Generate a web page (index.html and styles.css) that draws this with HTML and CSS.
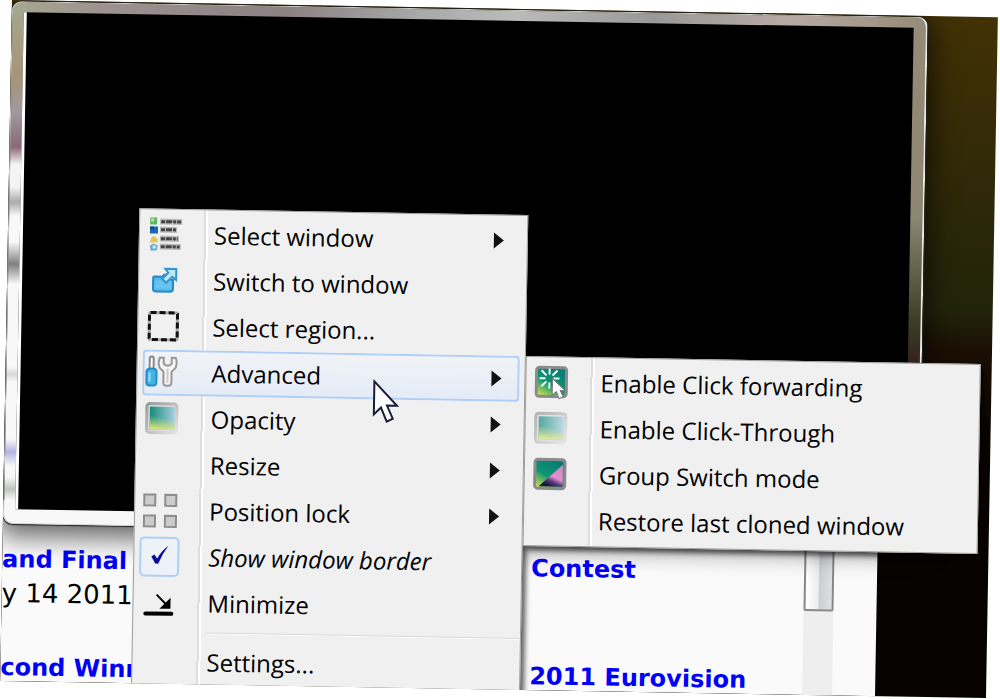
FILE: index.html
```html
<!DOCTYPE html>
<html lang="en">
<head>
<meta charset="UTF-8">
<meta name="viewport" content="width=device-width, initial-scale=1.0">
<title>Cloned window menu</title>
<link rel="stylesheet" href="styles.css">
</head>
<body>

<div class="desktop">
<div class="page">
<div class="news">
<div class="news-left">
<a class="headline" href="#">and Final -</a>
<p class="date">y 14 2011</p>
<a class="headline last" href="#">cond Winner</a>
</div>
<div class="news-right">
<a class="headline" href="#">Contest</a>
<a class="headline last" href="#">2011 Eurovision</a>
</div>
</div>
<div class="scrollbar"><div class="thumb"></div></div>
</div>

<div class="clone-window"><div class="preview"></div></div>

<div class="menu main-menu" role="menu">
<button class="item" type="button">
<svg class="icon" viewBox="0 0 36 36">
<path d="M3 1h7v7H3z" fill="#5fb85c"/><path d="M4 2h3v3H4z" fill="#b7e6a4"/>
<path d="M3 10h8v7H3z" fill="#1c67b5"/><path d="M3 10h4v3H3z" fill="#174a87"/>
<path d="M4 22l3-3 4 4v3H3z" fill="#e3c565"/>
<path d="M3 29l4-2 4 2-1 5H4z" fill="#69a9d4"/><path d="M6 29h3v3H6z" fill="#d8edf8"/>
<path d="M13 5h22M13 13h17M13 22h19M13 30h21" stroke="#bbb" stroke-width="6"/>
<path d="M14 5h20M14 13h15M14 22h17M14 30h19" stroke="#444" stroke-width="3" stroke-dasharray="4 1 6 1 3 1"/>
</svg>
<span>Select window</span><i class="arrow"></i>
</button>
<button class="item" type="button">
<svg class="icon" viewBox="0 0 36 36">
<path d="M8 14h8l2-2h4v5h5v9q0 3-3 3H10q-3 0-3-3V16q0-2 1-2z" fill="#55b9ed" stroke="#2789c5" stroke-width="2"/>
<path d="M9 18h16v8H9z" fill="#67c4f1"/>
<path d="M19 6h11v11l-4-3-6 6-4-4 6-6z" fill="#b9e8fa" stroke="#3297ce" stroke-width="2"/>
</svg>
<span>Switch to window</span>
</button>
<button class="item" type="button">
<svg class="icon" viewBox="0 0 36 36">
<rect x="4" y="4" width="28" height="27" rx="1" fill="none" stroke="#aaa" stroke-width="3"/>
<rect x="4" y="4" width="28" height="27" rx="1" fill="none" stroke="#111" stroke-width="3" stroke-dasharray="6 3"/>
</svg>
<span>Select region...</span>
</button>
<button class="item active" type="button">
<svg class="icon" viewBox="0 0 36 36">
<path d="M5 14V4q0-2 2-2t2 2v10" fill="#fff" stroke="#888" stroke-width="2"/>
<path d="M2 17q0-3 5-3t5 3v11q0 3-3 3H5q-3 0-3-3z" fill="#43b4ea" stroke="#2d8ac0" stroke-width="2"/>
<path d="M5 18v9" stroke="#a2e0fb" stroke-width="2"/>
<path d="M15 3h4v6q4 4 8 0V3h4q2 4 0 10l-4 4v11q0 3-3 3h-2q-3 0-3-3V17l-4-4q-2-5 0-10z" fill="#f5f5f5" stroke="#999" stroke-width="2"/>
<path d="M23 14v14" stroke="#ccc" stroke-width="2"/>
</svg>
<span>Advanced</span><i class="arrow"></i>
</button>
<button class="item" type="button">
<svg class="icon" viewBox="0 0 36 36">
<defs>
<linearGradient id="teal" x1="0" y1="0" x2="1" y2="0"><stop offset="0" stop-color="#168c7e"/><stop offset="1" stop-color="#a5cfdc"/></linearGradient>
<linearGradient id="glow" x1=".2" y1="0" x2="0" y2="1"><stop offset=".4" stop-color="#e8e85a" stop-opacity="0"/><stop offset="1" stop-color="#f1f183"/></linearGradient>
<linearGradient id="fade" x1="0" y1="0" x2="1" y2="1"><stop offset="0" stop-color="#999"/><stop offset="1" stop-color="#e4e4e4"/></linearGradient>
<linearGradient id="deep" x1=".6" y1="0" x2="0" y2="1"><stop offset="0" stop-color="#087d72"/><stop offset=".5" stop-color="#129472"/><stop offset="1" stop-color="#f0ee4a"/></linearGradient>
<linearGradient id="pink" x1="1" y1="0" x2=".5" y2="1"><stop offset="0" stop-color="#c38fb4"/><stop offset=".6" stop-color="#e58fd2"/><stop offset=".8" stop-color="#5b3a80"/><stop offset="1" stop-color="#1b1540"/></linearGradient>
</defs>
<rect x="3" y="3" width="30" height="29" rx="3" fill="#ddd" stroke="url(#fade)" stroke-width="3"/>
<path d="M6 6h25v23H6z" fill="url(#teal)"/><path d="M6 6h25v23H6z" fill="url(#glow)"/>
</svg>
<span>Opacity</span><i class="arrow"></i>
</button>
<button class="item" type="button">
<b class="icon"></b><span>Resize</span><i class="arrow"></i>
</button>
<button class="item" type="button">
<svg class="icon" viewBox="0 0 36 36">
<g fill="#ccc" stroke="#8d8d8d" stroke-width="2">
<path d="M2 2h11v11H2zM23 2h11v11H23zM2 23h11v11H2zM23 23h11v11H23z"/>
</g>
</svg>
<span>Position lock</span><i class="arrow"></i>
</button>
<label class="item checked">
<input class="tick" type="checkbox" checked>
<svg class="icon" viewBox="0 0 36 36">
<path d="M10 18l3-2 3 4q4-8 11-13-6 8-10 18h-3z" fill="#0c0c9c"/>
</svg>
<span>Show window border</span>
</label>
<button class="item" type="button">
<svg class="icon" viewBox="0 0 36 36">
<path d="M5 29h26" stroke="#000" stroke-width="4" stroke-linecap="round"/>
<path d="M16 10l11 11" stroke="#000" stroke-width="2"/>
<path d="M30 13v11H19z"/>
</svg>
<span>Minimize</span>
</button>
<hr class="separator">
<button class="item" type="button">
<b class="icon"></b><span>Settings...</span>
</button>
</div>

<div class="menu sub-menu" role="menu">
<button class="item" type="button">
<svg class="icon" viewBox="0 0 36 36">
<rect x="3" y="3" width="30" height="29" rx="3" fill="url(#deep)" stroke="#8b8b8b" stroke-width="3"/>
<path d="M16 10V4M19 11l5-5M20 14h6M13 11L8 6M12 14H6M13 17l-5 5M16 18v6" stroke="#e9fffb" stroke-width="2"/>
<path d="M19 14v17l4-4 3 7 4-2-3-6h5z" fill="#fff" stroke="#777" stroke-width="1"/>
</svg>
<span>Enable Click forwarding</span>
</button>
<button class="item" type="button">
<svg class="icon pale" viewBox="0 0 36 36">
<rect x="3" y="3" width="30" height="29" rx="3" fill="#ddd" stroke="url(#fade)" stroke-width="3"/>
<path d="M6 6h25v23H6z" fill="url(#teal)"/><path d="M6 6h25v23H6z" fill="url(#glow)"/>
</svg>
<span>Enable Click-Through</span>
</button>
<button class="item" type="button">
<svg class="icon" viewBox="0 0 36 36">
<rect x="3" y="3" width="30" height="29" rx="3" fill="url(#deep)" stroke="#8b8b8b" stroke-width="3"/>
<path d="M31 8v22H7z" fill="url(#pink)"/>
</svg>
<span>Group Switch mode</span>
</button>
<button class="item" type="button">
<b class="icon"></b><span>Restore last cloned window</span>
</button>
</div>

<svg class="pointer" viewBox="0 0 28 44">
<path d="M2 2v33l7-7 6 14 6-3-6-13h10z" fill="#fff" stroke="#1c1c38" stroke-width="2"/>
</svg>
</div>

</body>
</html>
```
FILE: styles.css
```css
html {
  height: 100%;
  overflow: hidden;
}
body {
  min-height: 100%;
  margin: 0;
  background: #fff;
  font-family: "Open Sans", "Noto Sans", sans-serif;
}
.desktop {  /* the whole desktop leans slightly to the right */
  position: relative;
  display: flex;
  width: calc(100% - 14px);
  height: calc(100vh - 18px);
  margin-left: 12px;
  overflow: hidden;
  background: linear-gradient(#423205, #332a08 20%, #22240a 43%, #1b0f05 49%, #090401 62%, #050201);
  transform: rotate(1deg);
  transform-origin: 0 0;
}

/* web page behind the windows */
.page {
  display: flex;
  width: calc(100% - 111px);
  margin-top: 500px;
  background: #fafafa;
}
.news {
  flex: 1;
  display: grid;
  grid-template-columns: 529px 1fr;
  align-items: start;
  padding-top: 42px;
  font-family: "DejaVu Sans", Verdana, sans-serif;
  font-size: 24px;
  line-height: 34px;
  white-space: nowrap;
}
.news-left, .news-right {
  display: flex;
  flex-direction: column;
}
.headline {
  color: #0000fa;
  font-size: 24px;
  font-weight: bold;
  text-decoration: none;
}
.date {
  margin: 0;
  font-size: 26px;
}
.news-left .last {
  margin-top: 40px;
}
.news-right .last {
  margin-top: 74px;
}
.scrollbar {
  width: 30px;
  margin-right: 43px;
  background: #eee;
}
.thumb {
  box-sizing: border-box;
  height: 97px;
  border: 2px solid #888;
  border-radius: 2px;
  background: linear-gradient(90deg, #fff, #ececee 48%, #ccced2 52%, #e0e0e3);
}

/* glass window */
.clone-window {
  position: absolute;
  top: 1px;
  left: 0;
  right: 70px;
  height: 523px;
  box-sizing: border-box;
  padding: 10px 12px 14px 11px;
  border: 1px solid #ccc;
  border-right: 2px solid #e8e8e0;
  border-radius: 10px;
  background:
    linear-gradient(#f8f8f8, #f8f8f8) bottom / 100% 15px no-repeat,
    linear-gradient(90deg, #a5a88f, #9c9292 10%, #8c8183 30%, #aaa 45%, #bbb 55%, #999 70%, #b8aaa4 85%, #958b78) top / 100% 11px no-repeat,
    linear-gradient(#a5a88f, #a89478 75px, #a09a9e 110px, #8a6878 145px, #f4f4f4 162px, #f4f4f4 185px, #aaa 200px, #f8f8f8 214px, #f8f8f8 240px, #808080 262px, #f8f8f8 282px, #f8f8f8 365px, #d8d8d8 372px, #f8f8f8 380px, #f8f8f8 437px, #b4b2e4 450px, #f8f8f8 464px, #f8f8f8 475px, #bfc3bf 487px, #f8f8f8 498px) left / 14px 100% no-repeat,
    linear-gradient(#958b78, #8c8672 200px, #3f4028 300px, #33251e 340px, #33251e) right / 14px 100% no-repeat;
  box-shadow: 0 0 1px 1px #222, 0 6px 26px 6px rgba(0, 0, 0, 0.6);
}
.preview {
  height: 100%;
  box-sizing: border-box;
  border-left: 3px solid #fff;
  background: #000;
}

/* context menus */
.menu {
  position: absolute;
  display: flex;
  flex-direction: column;
  box-sizing: border-box;
  padding: 2px 5px;
  border: 1px solid #a0a0a0;
  background: linear-gradient(90deg, transparent 64px, #ddd 64px, #ddd 66px, #fff 66px, #fff 68px, transparent 68px) #f0f0f0;
  box-shadow: 4px 4px 5px rgba(0, 0, 0, 0.6);
}
.main-menu {
  top: 206px;
  left: 131px;
  width: 389px;
}
.sub-menu {
  top: 347px;
  left: 520px;
  width: 455px;
}
.item {
  display: grid;
  grid-template-columns: 40px 1fr 11px;
  align-items: center;
  height: 46px;
  box-sizing: border-box;
  padding: 0 17px 0 0;
  border: 0;
  background: none;
  color: #000;
  font-family: inherit;
  font-size: 24px;
  line-height: 32px;
  text-align: left;
  white-space: nowrap;
}
.item span {
  grid-column: 2;
  padding-left: 29px;
}
.active {
  border-radius: 4px;
  background: linear-gradient(#f1f3f7, #e4ebf6);
  box-shadow: inset 0 0 0 2px #aecff7;
}
.icon {
  width: 36px;
  height: 36px;
  justify-self: center;
}
.pale {
  opacity: 0.7;
}
.arrow {
  border: 8px solid transparent;
  border-left: 10px solid #111;
  border-right: 0;
}
.checked {
  font-style: italic;
}
.tick {
  grid-area: 1 / 1;
  appearance: none;
  width: 40px;
  height: 40px;
  margin: 0;
  border: 2px solid #aecff7;
  border-radius: 5px;
  background: #edf2f9;
}
.checked .icon {
  grid-area: 1 / 1;
  z-index: 1;
}
.separator {
  height: 1px;
  margin: 6px -4px 5px 67px;
  border: 0;
  border-bottom: 1px solid #fff;
  background: #d8d8d8;
}

.pointer {
  position: absolute;
  top: 373px;
  left: 367px;
  width: 28px;
  height: 44px;
}
```
